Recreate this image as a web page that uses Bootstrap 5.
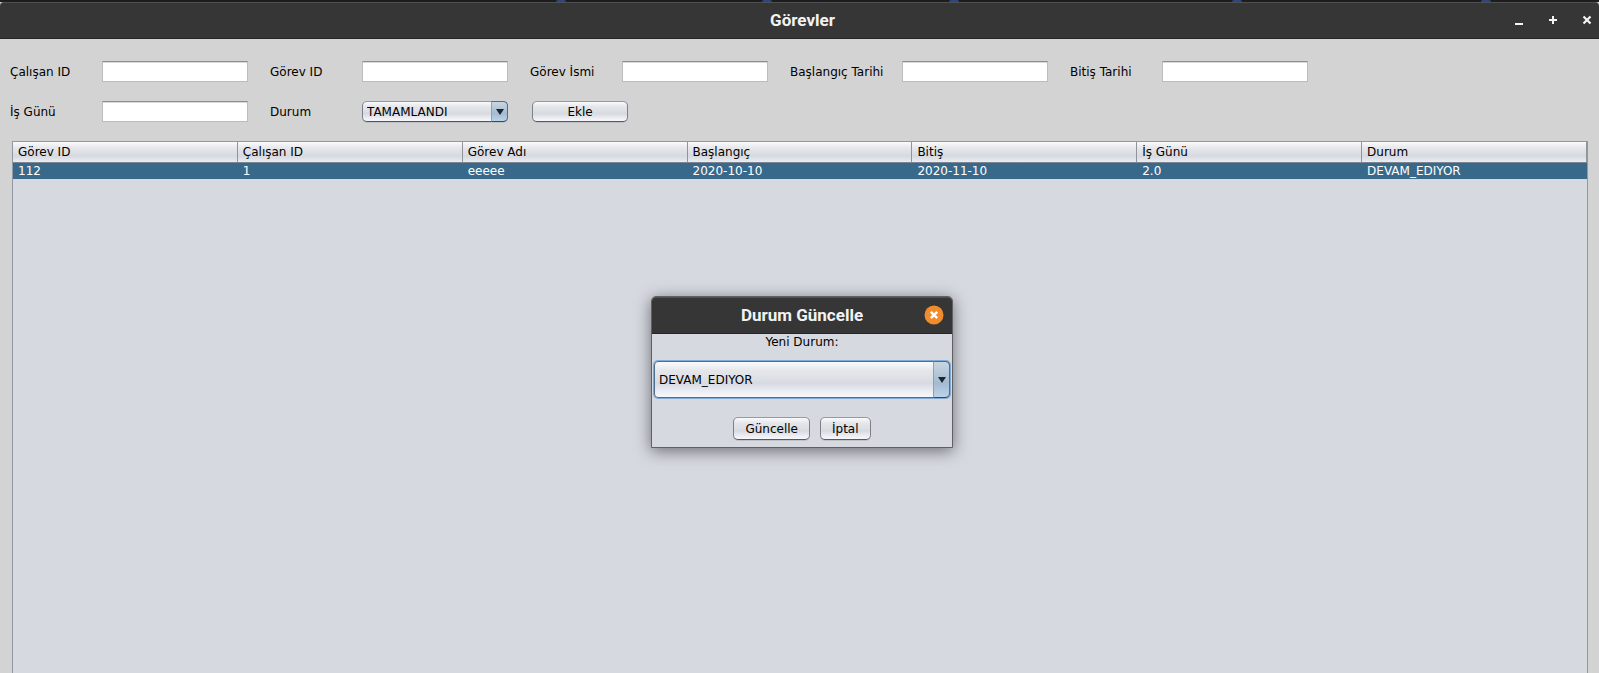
<!DOCTYPE html>
<html lang="tr">
<head>
<meta charset="utf-8">
<meta name="viewport" content="width=device-width, initial-scale=1">
<title>Görevler</title>
<link href="https://cdn.jsdelivr.net/npm/bootstrap@5.3.0/dist/css/bootstrap.min.css" rel="stylesheet">
<style>
  :root { --panel: #d6d9e0; --metal: linear-gradient(#fafafc, #e4e6ea 25%, #dcdfe4 50%, #d6d9df 60%, #eceef4 85%, #f7f8fd); }
  body { font: 12px/16px "DejaVu Sans", sans-serif; color: #000; background: #d3d3d3; }
  .desktop-strip { height: 2px; background: #1d1d1f; }
  .desktop-strip i { width: 10px; height: 2px; border-radius: 5px 5px 0 0; background: #2a4684; }
  .title-bar { height: 37px; background: #363636; border-top: 1px solid #505050; border-bottom: 1px solid #262626; color: #f2f2f2; }
  .title-bar h1, .title-bar h2 { font: 700 17px/20px Roboto, sans-serif; padding-bottom: 2px; }
  .main-bar { border-radius: 4px 4px 0 0; padding-left: 6px; }
  .win-buttons { right: 6px; gap: 22px; }
  .win-buttons button, .close-dot { border: 0; padding: 0 0 2px; background: none; color: #f4f4f4; display: flex; }
  .task-form { padding: 22px 10px 19px; row-gap: 19px; }
  .field-row { column-gap: 22px; }
  .field-name { width: 92px; }
  .field-name.wide { width: 112px; }
  .field-box { width: 146px; height: 21px; flex: none; }
  input.field-box { border: 1px solid #babcbf; border-top-color: #8d8e91; border-radius: 0; background: #fff; box-shadow: inset 0 1px #d8d8d8; padding: 0 4px; }
  .metal-btn { background: var(--metal); border: 1px solid #7c8087; border-top-color: #9599a0; border-bottom-color: #565960; border-radius: 5px; color: #000; padding: 0; text-align: center; box-shadow: 0 1px #bfc1c5; }
  .add-btn { width: 96px; height: 21px; margin-left: 2px; }
  .combo select { appearance: none; width: 100%; height: 100%; border: 1px solid #7c8087; border-top-color: #9599a0; border-bottom-color: #4c5563; border-radius: 5px; background: var(--metal); padding: 0 20px 0 4px; color: #000; box-shadow: 0 1px #bfc1c5; outline: 0; }
  .combo-arrow { top: 0; right: 0; bottom: 0; width: 17px; border: 1px solid #4f6f8d; border-left-color: #8aa2b8; border-bottom-color: #2f4a65; border-radius: 0 5px 5px 0; background: linear-gradient(#c8d6e3, #adc2d5 45%, #a3bad0 60%, #bdd3e8); pointer-events: none; }
  .table-pane { margin: 0 11px 0 12px; border: 1px solid #9297a1; border-bottom: 0; background: var(--panel); min-height: calc(100vh - 141px); }
  .task-table { width: 100%; table-layout: fixed; border-collapse: separate; border-spacing: 0; }
  .task-table th { height: 21px; padding: 0 5px; font-weight: 400; background: linear-gradient(#fbfbfc, #e6e7eb 30%, #dbdde2 60%, #d6d9df 70%, #e9edf5); border-right: 1px solid #8f949d; border-bottom: 1px solid #7f8590; }
  .task-table td { height: 16px; padding: 1px 5px 0; line-height: 15px; background: #39698a; color: #fff; }
  .dialog-layer { top: 296px; left: 5px; right: 0; pointer-events: none; }
  .status-dialog { width: 302px; background: var(--panel); border: 1px solid #5e6066; border-radius: 5px 5px 0 0; box-shadow: 0 3px 16px rgba(0,0,0,.5); pointer-events: auto; }
  .status-dialog .title-bar { border-radius: 4px 4px 0 0; }
  .close-dot { right: 8px; }
  .status-combo { height: 37px; margin: 11px 2px 19px; }
  .status-combo select { border-color: #4a6f92; box-shadow: 0 0 0 1px #81aad2; border-radius: 4px; }
  .dialog-actions { gap: 10px; padding-bottom: 7px; }
  .dialog-actions button { height: 23px; padding: 0 11px; }
</style>
<script src="https://cdn.jsdelivr.net/npm/bootstrap@5.3.0/dist/js/bootstrap.bundle.min.js"></script>
</head>
<body class="overflow-hidden">
<div class="desktop-strip d-flex">
  <span style="width:34.8%"></span><i></i><span style="width:12.2%"></span><i></i><span style="width:11.1%"></span><i></i><span style="width:17.1%"></span><i></i><span style="width:14.9%"></span><i></i>
</div>
<header class="title-bar main-bar position-relative d-flex align-items-center justify-content-center">
  <h1 class="m-0">Görevler</h1>
  <div class="win-buttons position-absolute d-flex">
    <button type="button" aria-label="Küçült"><svg width="12" height="12"><path d="M2 10h8" stroke="currentColor" stroke-width="2"/></svg></button>
    <button type="button" aria-label="Büyüt"><svg width="12" height="12"><path d="M2 6h8M6 2v8" stroke="currentColor" stroke-width="2"/></svg></button>
    <button type="button" aria-label="Kapat"><svg width="12" height="12"><path d="M2.500 2.500l7 7M9.500 2.500l-7 7" stroke="currentColor" stroke-width="2.200"/></svg></button>
  </div>
</header>
<main>
  <form class="task-form d-flex flex-column">
    <div class="field-row d-flex">
      <div class="d-flex align-items-center"><label class="field-name" for="calisan">Çalışan ID</label><input class="field-box" id="calisan" type="text"></div>
      <div class="d-flex align-items-center"><label class="field-name" for="gorev">Görev ID</label><input class="field-box" id="gorev" type="text"></div>
      <div class="d-flex align-items-center"><label class="field-name" for="isim">Görev İsmi</label><input class="field-box" id="isim" type="text"></div>
      <div class="d-flex align-items-center"><label class="field-name wide" for="baslangic">Başlangıç Tarihi</label><input class="field-box" id="baslangic" type="text"></div>
      <div class="d-flex align-items-center"><label class="field-name" for="bitis">Bitiş Tarihi</label><input class="field-box" id="bitis" type="text"></div>
    </div>
    <div class="field-row d-flex">
      <div class="d-flex align-items-center"><label class="field-name" for="gun">İş Günü</label><input class="field-box" id="gun" type="text"></div>
      <div class="d-flex align-items-center"><label class="field-name" for="durum">Durum</label>
        <div class="combo field-box position-relative">
          <select id="durum"><option>TAMAMLANDI</option><option>DEVAM_EDIYOR</option></select>
          <span class="combo-arrow position-absolute d-flex align-items-center justify-content-center"><svg width="8" height="6"><path d="M0 0h8L4 6z" fill="#1c2630"/></svg></span>
        </div>
      </div>
      <button type="button" class="metal-btn add-btn">Ekle</button>
    </div>
  </form>
  <div class="table-pane">
    <table class="task-table">
      <thead><tr><th>Görev ID</th><th>Çalışan ID</th><th>Görev Adı</th><th>Başlangıç</th><th>Bitiş</th><th>İş Günü</th><th>Durum</th></tr></thead>
      <tbody><tr><td>112</td><td>1</td><td>eeeee</td><td>2020-10-10</td><td>2020-11-10</td><td>2.0</td><td>DEVAM_EDIYOR</td></tr></tbody>
    </table>
  </div>
</main>
<div class="dialog-layer position-absolute d-flex justify-content-center">
  <section class="status-dialog" role="dialog" aria-labelledby="dialog-title">
    <div class="title-bar position-relative d-flex align-items-center justify-content-center">
      <h2 class="m-0" id="dialog-title">Durum Güncelle</h2>
      <button type="button" class="close-dot position-absolute" aria-label="Kapat"><svg width="20" height="20"><circle cx="10" cy="10" r="9.500" fill="#f18b2b"/><path d="M6.800 6.800l6.400 6.400M13.200 6.800l-6.400 6.400" stroke="#fff" stroke-width="2.400"/></svg></button>
    </div>
    <label class="d-block text-center" for="yeni-durum">Yeni Durum:</label>
    <div class="combo status-combo position-relative">
      <select id="yeni-durum"><option>DEVAM_EDIYOR</option><option>TAMAMLANDI</option></select>
      <span class="combo-arrow position-absolute d-flex align-items-center justify-content-center"><svg width="8" height="6"><path d="M0 0h8L4 6z" fill="#1c2630"/></svg></span>
    </div>
    <div class="dialog-actions d-flex justify-content-center">
      <button type="button" class="metal-btn">Güncelle</button>
      <button type="button" class="metal-btn">İptal</button>
    </div>
  </section>
</div>
</body>
</html>
